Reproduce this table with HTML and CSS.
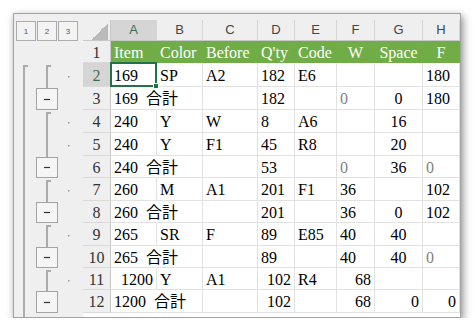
FILE: index.html
```html
<!DOCTYPE html>
<html lang="ja">
<head>
  <meta charset="UTF-8">
  <title>Outline sheet</title>
  <link rel="stylesheet" href="styles.css">
</head>
<body>
  <div class="window">
    <div class="window-top"></div>
    <div class="sheet-area">
      <div class="outline">
        <div class="outline-levels">
          <span class="level-button">1</span>
          <span class="level-button">2</span>
          <span class="level-button">3</span>
        </div>
        <svg class="outline-bars" width="69" height="276" viewBox="0 0 69 276">
          <g fill="none" stroke="#ababab" stroke-width="2">
            <path d="M14 25 H10 V280" />
            <path d="M37 25 H33 V47" />
            <path d="M37 72 H33 V116" />
            <path d="M37 140 H33 V161" />
            <path d="M37 185 H33 V206" />
            <path d="M37 230 H33 V250" />
          </g>
          <g fill="#f5f5f5" stroke="#a3a3a3" stroke-width="1">
            <rect x="22.5" y="47.5" width="21" height="21" />
            <rect x="22.5" y="116.5" width="21" height="20" />
            <rect x="22.5" y="161.5" width="21" height="20" />
            <rect x="22.5" y="206.5" width="21" height="20" />
            <rect x="22.5" y="250.5" width="21" height="21" />
          </g>
          <g stroke="#333" stroke-width="1.2">
            <path d="M30 58.5 H36" />
            <path d="M30 126.5 H36" />
            <path d="M30 171.5 H36" />
            <path d="M30 216.5 H36" />
            <path d="M30 261.5 H36" />
          </g>
          <g fill="#9a9a9a">
            <rect x="54" y="35" width="1.5" height="1.5" />
            <rect x="54" y="81" width="1.5" height="1.5" />
            <rect x="54" y="104" width="1.5" height="1.5" />
            <rect x="54" y="149" width="1.5" height="1.5" />
            <rect x="54" y="194" width="1.5" height="1.5" />
            <rect x="54" y="239" width="1.5" height="1.5" />
          </g>
        </svg>
      </div>

      <div class="grid">
        <div class="corner"><span class="corner-mark"></span></div>
        <div class="col-head is-selected">A</div>
        <div class="col-head">B</div>
        <div class="col-head">C</div>
        <div class="col-head">D</div>
        <div class="col-head">E</div>
        <div class="col-head">F</div>
        <div class="col-head">G</div>
        <div class="col-head">H</div>

        <div class="row-head">1</div>
        <div class="cell title">Item</div>
        <div class="cell title">Color</div>
        <div class="cell title">Before</div>
        <div class="cell title">Q'ty</div>
        <div class="cell title">Code</div>
        <div class="cell title mid">W</div>
        <div class="cell title mid">Space</div>
        <div class="cell title mid">F</div>

        <div class="row-head is-selected">2</div>
        <div class="cell active">169</div>
        <div class="cell">SP</div>
        <div class="cell">A2</div>
        <div class="cell">182</div>
        <div class="cell">E6</div>
        <div class="cell"></div>
        <div class="cell"></div>
        <div class="cell">180</div>

        <div class="row-head">3</div>
        <div class="cell spill">169&ensp;合計</div>
        <div class="cell"></div>
        <div class="cell"></div>
        <div class="cell">182</div>
        <div class="cell"></div>
        <div class="cell faint">0</div>
        <div class="cell mid">0</div>
        <div class="cell">180</div>

        <div class="row-head">4</div>
        <div class="cell">240</div>
        <div class="cell">Y</div>
        <div class="cell">W</div>
        <div class="cell">8</div>
        <div class="cell">A6</div>
        <div class="cell"></div>
        <div class="cell mid">16</div>
        <div class="cell"></div>

        <div class="row-head">5</div>
        <div class="cell">240</div>
        <div class="cell">Y</div>
        <div class="cell">F1</div>
        <div class="cell">45</div>
        <div class="cell">R8</div>
        <div class="cell"></div>
        <div class="cell mid">20</div>
        <div class="cell"></div>

        <div class="row-head">6</div>
        <div class="cell spill">240&ensp;合計</div>
        <div class="cell"></div>
        <div class="cell"></div>
        <div class="cell">53</div>
        <div class="cell"></div>
        <div class="cell faint">0</div>
        <div class="cell mid">36</div>
        <div class="cell faint">0</div>

        <div class="row-head">7</div>
        <div class="cell">260</div>
        <div class="cell">M</div>
        <div class="cell">A1</div>
        <div class="cell">201</div>
        <div class="cell">F1</div>
        <div class="cell">36</div>
        <div class="cell"></div>
        <div class="cell">102</div>

        <div class="row-head">8</div>
        <div class="cell spill">260&ensp;合計</div>
        <div class="cell"></div>
        <div class="cell"></div>
        <div class="cell">201</div>
        <div class="cell"></div>
        <div class="cell">36</div>
        <div class="cell mid">0</div>
        <div class="cell">102</div>

        <div class="row-head">9</div>
        <div class="cell">265</div>
        <div class="cell">SR</div>
        <div class="cell">F</div>
        <div class="cell">89</div>
        <div class="cell">E85</div>
        <div class="cell">40</div>
        <div class="cell mid">40</div>
        <div class="cell"></div>

        <div class="row-head">10</div>
        <div class="cell spill">265&ensp;合計</div>
        <div class="cell"></div>
        <div class="cell"></div>
        <div class="cell">89</div>
        <div class="cell"></div>
        <div class="cell">40</div>
        <div class="cell mid">40</div>
        <div class="cell faint">0</div>

        <div class="row-head">11</div>
        <div class="cell right">1200</div>
        <div class="cell">Y</div>
        <div class="cell">A1</div>
        <div class="cell right">102</div>
        <div class="cell">R4</div>
        <div class="cell right">68</div>
        <div class="cell"></div>
        <div class="cell"></div>

        <div class="row-head">12</div>
        <div class="cell spill">1200&ensp;合計</div>
        <div class="cell"></div>
        <div class="cell"></div>
        <div class="cell right">102</div>
        <div class="cell"></div>
        <div class="cell right">68</div>
        <div class="cell right">0</div>
        <div class="cell right">0</div>
      </div>
    </div>
  </div>
</body>
</html>
```

FILE: styles.css
```css
body {
  margin: 0;
  background-color: #fff;
}

.window {
  margin: 13px 0 0 13px;
  width: 446px;
  height: 303px;
  border: 1px solid #a2a2a2;
  background-color: #efefef;
  box-shadow: 2px 3px 8px rgba(0, 0, 0, 0.45);
  overflow: hidden;
}

.window-top {
  height: 6px;
}

.sheet-area {
  display: flex;
  height: 297px;
}

.outline {
  width: 69px;
  flex-shrink: 0;
}

.outline-levels {
  height: 21px;
  display: flex;
  gap: 1px;
  padding: 1px 0 0 2px;
  box-sizing: border-box;
}

.level-button {
  width: 20px;
  height: 20px;
  box-sizing: border-box;
  border: 1px solid #acacac;
  background-color: #f3f3f3;
  display: flex;
  align-items: center;
  justify-content: center;
  font-family: "Liberation Sans", sans-serif;
  font-size: 8px;
  color: #555;
}

.outline-bars {
  display: block;
}

.grid {
  flex: 1;
  display: grid;
  grid-template-columns: 28px 46px 46px 55px 37px 42px 38px 48px 37px;
  grid-template-rows: 21px 22px 24px 23px 23px 23px 22px 23px 22px 23px 22px 22px 23px;
  align-content: start;
  background-color: #fff;
  font-family: "Liberation Serif", "Noto Sans CJK JP", serif;
  font-size: 16px;
  line-height: 18px;
  color: #000;
}

.corner {
  background-color: #efefef;
  border-right: 1px solid #c8c8c8;
  border-bottom: 1px solid #c8c8c8;
  display: flex;
  align-items: flex-end;
  justify-content: flex-end;
  padding-right: 2px;
}

.corner-mark {
  width: 17px;
  height: 17px;
  background: linear-gradient(to bottom right, transparent 50%, #bababa 50%);
}

.col-head {
  background-color: #efefef;
  border-right: 1px solid #d6d6d6;
  border-bottom: 1px solid #c8c8c8;
  display: flex;
  align-items: center;
  justify-content: center;
  font-family: "Liberation Sans", sans-serif;
  font-size: 13px;
  color: #444;
}

.row-head {
  background-color: #efefef;
  border-right: 1px solid #c8c8c8;
  border-bottom: 1px solid #dadada;
  display: flex;
  align-items: center;
  justify-content: center;
  padding-top: 2px;
  color: #333;
}

.is-selected {
  background-color: #d5d5d5;
  color: #3b6b50;
}

.cell {
  border-right: 1px solid #e2e2e2;
  border-bottom: 1px solid #e2e2e2;
  padding: 2px 3px 0;
  display: flex;
  align-items: center;
  white-space: nowrap;
  min-width: 0;
}

.title {
  background-color: #70ad47;
  border-color: #70ad47;
  color: #fff;
}

.mid {
  justify-content: center;
}

.right {
  justify-content: flex-end;
}

.faint {
  color: #7f7f7f;
}

.spill {
  border-right-color: transparent;
}

.active {
  position: relative;
}

.active::after {
  content: "";
  position: absolute;
  left: -1px;
  top: -1px;
  right: -1px;
  bottom: -1px;
  border: 2px solid #217346;
}

.active::before {
  content: "";
  position: absolute;
  right: -3px;
  bottom: -3px;
  width: 4px;
  height: 4px;
  background-color: #217346;
  border: 1px solid #fff;
  z-index: 1;
}
```
